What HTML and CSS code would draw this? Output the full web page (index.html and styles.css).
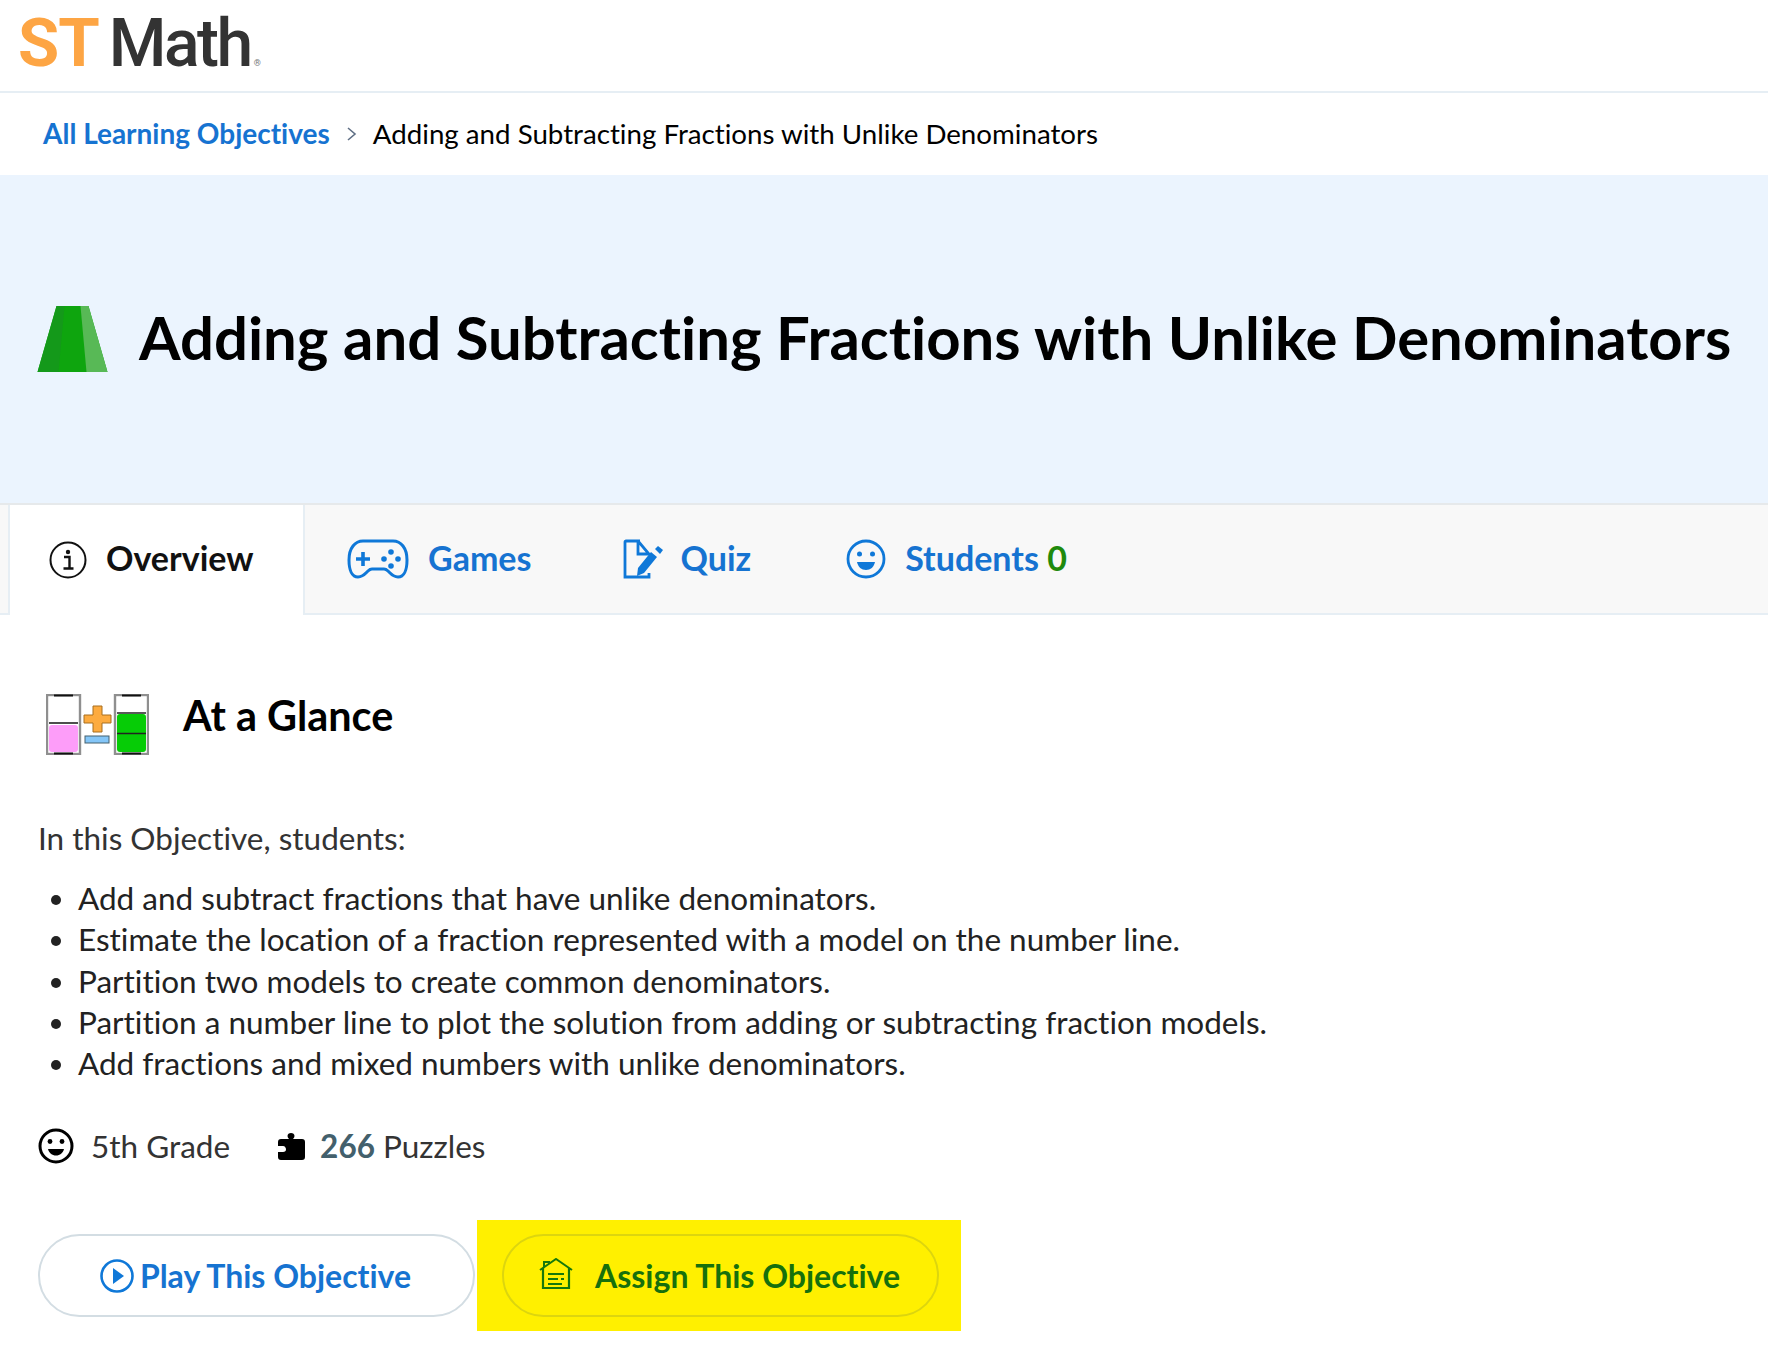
FILE: index.html
```html
<!DOCTYPE html>
<html>
<head>
    <meta charset="UTF-8">
    <title>Adding and Subtracting Fractions with Unlike Denominators</title>
    <link rel="stylesheet" href="styles.css">
</head>
<body>
    <header class="topbar">
        <div class="logo"><span class="logo-st">ST</span><span class="logo-math">Math</span><span class="logo-reg">®</span></div>
    </header>

    <nav class="breadcrumb">
        <a class="crumb-link" href="#">All Learning Objectives</a>
        <svg class="crumb-sep" viewBox="0 0 12 16"><path d="M2 2l7 6-7 6" fill="none" stroke="#5f6f85" stroke-width="1.6"/></svg>
        <span class="crumb-current">Adding and Subtracting Fractions with Unlike Denominators</span>
    </nav>

    <section class="hero">
        <svg class="hero-icon" viewBox="0 0 70 66">
            <path d="M19 0H51L70 66H0Z" fill="#0ea50e"/>
            <path d="M43 0H51L70 66H49Z" fill="#58b956"/>
            <path d="M19 0H27L21 66H0Z" fill="#14991a"/>
        </svg>
        <h1>Adding and Subtracting Fractions with Unlike Denominators</h1>
    </section>

    <div class="tabs">
        <a class="tab tab-active" href="#">
            <svg class="tab-icon info-icon" viewBox="0 0 38 38">
                <circle cx="19" cy="19" r="17.5" fill="none" stroke="#111" stroke-width="2"/>
                <circle cx="19" cy="11" r="2.2" fill="#111"/>
                <path d="M15 16h5.5v11M14.500 27.500h10" fill="none" stroke="#111" stroke-width="2.400"/>
            </svg>
            <span class="tab-label">Overview</span>
        </a>
        <a class="tab" href="#">
            <svg class="tab-icon games-icon" viewBox="0 0 62 40">
                <path d="M16 2h30c8 0 14 7 14 19 0 10-3 17-9 17-5 0-7-3-10-6-1-1-2-2-4-2h-12c-2 0-3 1-4 2-3 3-5 6-10 6-6 0-9-7-9-17C2 9 8 2 16 2z" fill="none" stroke="#0f78d8" stroke-width="3"/>
                <path d="M16 13v14M9 20h14" stroke="#0f78d8" stroke-width="3.600" fill="none"/>
                <circle cx="44" cy="13" r="2.800" fill="#0f78d8"/>
                <circle cx="44" cy="27" r="2.800" fill="#0f78d8"/>
                <circle cx="37" cy="20" r="2.800" fill="#0f78d8"/>
                <circle cx="51" cy="20" r="2.800" fill="#0f78d8"/>
            </svg>
            <span class="tab-label">Games</span>
        </a>
        <a class="tab" href="#">
            <svg class="tab-icon quiz-icon" viewBox="0 0 42 40">
                <path d="M17 2H3a1 1 0 0 0-1 1v35h24v-4M15 2v13h11L15 2" fill="none" stroke="#0f78d8" stroke-width="2.800"/>
                <path d="M14 37l1-8 13-16 6 5-13 16z" fill="#0f78d8"/>
                <path d="M32 10l3-3 5 4-3 4z" fill="#0f78d8"/>
            </svg>
            <span class="tab-label">Quiz</span>
        </a>
        <a class="tab" href="#">
            <svg class="tab-icon smile-icon" viewBox="0 0 40 40">
                <circle cx="20" cy="20" r="18" fill="none" stroke="#0f78d8" stroke-width="2.800"/>
                <circle cx="13.500" cy="15" r="2.500" fill="#0f78d8"/>
                <circle cx="26.500" cy="15" r="2.500" fill="#0f78d8"/>
                <path d="M11 23h18c-1 5-4.500 8-9 8s-8-3-9-8z" fill="#0f78d8"/>
            </svg>
            <span class="tab-label">Students <span class="tab-count">0</span></span>
        </a>
    </div>

    <main class="content">
        <div class="glance">
            <svg class="glance-icon" viewBox="0 0 103 61">
                <rect x="1" y="1" width="33" height="59" fill="#fff" stroke="#8f8f8f" stroke-width="2.400"/>
                <rect x="3" y="31" width="29" height="27" rx="3" fill="#fd9df9"/>
                <path d="M3 29h29" stroke="#222" stroke-width="1.600"/>
                <path d="M8 1.500h19M8 59.500h19" stroke="#111" stroke-width="2"/>
                <path d="M47 12h9v9h9v8h-9v9h-9v-9h-9v-8h9z" fill="#fdab3f" stroke="#a86f1e" stroke-width="1"/>
                <rect x="39" y="42" width="24" height="7" fill="#84c6f8" stroke="#45606e" stroke-width="1"/>
                <rect x="69" y="1" width="33" height="59" fill="#fff" stroke="#8f8f8f" stroke-width="2.400"/>
                <rect x="71" y="20" width="29" height="38" rx="3" fill="#06cc06"/>
                <path d="M71 19h29M71 39.500h29" stroke="#222" stroke-width="1.600"/>
                <path d="M76 1.500h19M76 59.500h19" stroke="#111" stroke-width="2"/>
            </svg>
            <h2>At a Glance</h2>
        </div>

        <p class="intro">In this Objective, students:</p>
        <ul class="goals">
            <li>Add and subtract fractions that have unlike denominators.</li>
            <li>Estimate the location of a fraction represented with a model on the number line.</li>
            <li>Partition two models to create common denominators.</li>
            <li>Partition a number line to plot the solution from adding or subtracting fraction models.</li>
            <li>Add fractions and mixed numbers with unlike denominators.</li>
        </ul>

        <div class="meta">
            <span class="meta-item grade">
                <svg class="meta-smile" viewBox="0 0 36 36">
                    <circle cx="18" cy="18" r="16" fill="none" stroke="#000" stroke-width="3"/>
                    <circle cx="12" cy="13.500" r="2.400" fill="#000"/>
                    <circle cx="24" cy="13.500" r="2.400" fill="#000"/>
                    <path d="M10 21h16c-1 4-4 6.500-8 6.500s-7-2.500-8-6.500z" fill="#000"/>
                </svg>
                <span>5th Grade</span>
            </span>
            <span class="meta-item puzzles">
                <svg class="meta-puzzle" viewBox="0 0 27 28">
                    <path d="M8 7h3c-1-1-1.500-2-1.500-3C9.500 2 11 1 13 1s3.500 1 3.500 3c0 1-.5 2-1.500 3h9c2 0 3 1 3 3v15c0 2-1 3-3 3H3c-2 0-3-1-3-3v-5h5c2 0 3-1 3-2.500S7 14 5 14H0v-4c0-2 1-3 3-3z" fill="#000"/>
                </svg>
                <span><span class="puzzle-count">266</span> Puzzles</span>
            </span>
        </div>

        <div class="actions">
            <a class="pill pill-play" href="#">
                <svg class="play-icon" viewBox="0 0 34 34">
                    <circle cx="17" cy="17" r="15.500" fill="none" stroke="#0f78d8" stroke-width="2.600"/>
                    <path d="M13 9l11 8-11 8z" fill="#0f78d8"/>
                </svg>
                <span>Play This Objective</span>
            </a>
            <div class="highlight">
                <a class="pill pill-assign" href="#">
                    <svg class="assign-icon" viewBox="0 0 34 32">
                        <path d="M1 12L17 1l16 11" fill="none" stroke="#16780c" stroke-width="2"/>
                        <path d="M5 9v-5h5v2" fill="none" stroke="#16780c" stroke-width="2"/>
                        <path d="M4 10v20h26V10" fill="none" stroke="#16780c" stroke-width="2.200"/>
                        <path d="M9 15h16v2H9zM9 20h10v2H9zM22 20h3v2h-3zM9 25h14v2H9z" fill="#16780c"/>
                    </svg>
                    <span>Assign This Objective</span>
                </a>
            </div>
        </div>
    </main>
</body>
</html>
```

FILE: styles.css
```css
body {
    margin: 0;
    background-color: #fff;
    color: #000;
    font-family: Lato, "Liberation Sans", sans-serif;
    font-variant-ligatures: none;
    overflow: hidden;
}

a {
    text-decoration: none;
}

.topbar {
    height: 91px;
    border-bottom: 2px solid #e6eef4;
    padding-left: 18px;
}

.logo {
    display: flex;
    align-items: baseline;
    height: 91px;
    line-height: 86px;
    font-family: Roboto, sans-serif;
}

.logo-st {
    font-weight: 700;
    font-size: 67px;
    color: #fda544;
    letter-spacing: -1px;
}

.logo-math {
    font-weight: 500;
    font-size: 66px;
    color: #333;
    margin-left: 10px;
    letter-spacing: -2.500px;
}

.logo-reg {
    font-size: 9px;
    color: #777;
    margin-left: 3px;
}

.breadcrumb {
    height: 80px;
    padding-bottom: 2px;
    display: flex;
    align-items: center;
    padding-left: 43px;
    font-size: 28px;
}

.crumb-link {
    color: #1673d1;
    font-weight: 700;
}

.crumb-sep {
    width: 12px;
    height: 16px;
    margin: 2px 15px 0 16px;
}

.crumb-current {
    font-size: 27.700px;
}

.hero {
    height: 328px;
    background-color: #ebf4fe;
    display: flex;
    align-items: center;
    padding-left: 37px;
}

.hero-icon {
    width: 71px;
    height: 66px;
    margin-right: 31px;
}

.hero h1 {
    margin: 0 0 4px;
    font-size: 59.870px;
    font-weight: 700;
    white-space: nowrap;
}

.tabs {
    height: 112px;
    box-sizing: border-box;
    background-color: #f8f8f8;
    border-top: 2px solid #e6e9eb;
    border-bottom: 2px solid #e6eef4;
    display: flex;
    padding-left: 8px;
    font-size: 34px;
    font-weight: 700;
}

.tab {
    display: flex;
    align-items: center;
    color: #1673d1;
    white-space: pre;
}

.tab-label {
    margin-bottom: 4px;
}

.tab-active {
    width: 297px;
    box-sizing: border-box;
    margin-bottom: -2px;
    background-color: #fff;
    border-left: 2px solid #e6eef4;
    border-right: 2px solid #e6eef4;
    padding-left: 39px;
    color: #111;
}

.tab-active .tab-label {
    margin-bottom: 6px;
}

.tab-icon {
    flex: none;
}

.info-icon {
    width: 38px;
    height: 38px;
    margin-right: 19px;
}

.games-icon {
    width: 62px;
    height: 40px;
    margin: 0 19px 0 42px;
}

.quiz-icon {
    width: 42px;
    height: 40px;
    margin: 0 15px 0 92px;
}

.smile-icon {
    width: 40px;
    height: 40px;
    margin: 0 19px 0 95px;
}

.tab-count {
    color: #1f8a0d;
}

.content {
    padding: 0 38px;
}

.glance {
    display: flex;
    align-items: center;
    height: 61px;
    margin-top: 79px;
    padding-left: 8px;
}

.glance-icon {
    width: 103px;
    height: 61px;
    margin-right: 34px;
}

.glance h2 {
    margin: 0 0 19px;
    font-size: 41.400px;
    font-weight: 700;
}

.intro {
    margin: 61px 0 0;
    font-size: 31.500px;
    line-height: 44px;
    color: #333;
}

.goals {
    margin: 18px 0 0;
    padding-left: 40px;
    font-size: 31.500px;
    line-height: 41.300px;
    color: #222;
}

.meta {
    display: flex;
    align-items: center;
    margin-top: 42px;
    font-size: 31.500px;
    color: #333;
    height: 40px;
}

.meta-item {
    display: flex;
    align-items: center;
    white-space: pre;
}

.meta-smile {
    width: 36px;
    height: 36px;
    margin-right: 17px;
}

.puzzles {
    margin-left: 48px;
}

.meta-puzzle {
    width: 27px;
    height: 28px;
    margin-right: 15px;
}

.puzzle-count {
    color: #43606c;
    font-weight: 700;
}

.actions {
    display: flex;
    align-items: center;
    margin-top: 54px;
}

.pill {
    width: 437px;
    height: 83px;
    box-sizing: border-box;
    border-radius: 42px;
    border: 2px solid #d3dde3;
    display: flex;
    align-items: center;
    font-size: 32px;
    font-weight: 700;
    white-space: nowrap;
}

.pill-play {
    color: #1673d1;
    justify-content: center;
    background-color: #fff;
    padding-right: 2px;
}

.play-icon {
    width: 34px;
    height: 34px;
    margin-right: 6px;
}

.highlight {
    background-color: #fff000;
    margin-left: 2px;
    padding: 14px 22px 14px 25px;
}

.pill-assign {
    color: #16700c;
    border-color: #dcd50f;
    padding-left: 35px;
}

.assign-icon {
    width: 34px;
    height: 32px;
    margin: 0 22px 4px 0;
}
```
